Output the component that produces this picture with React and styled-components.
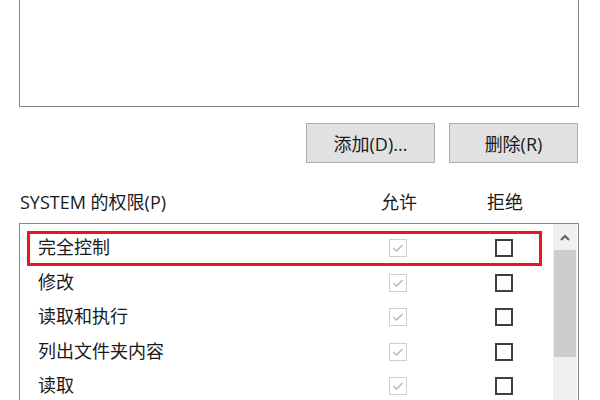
import React from 'react'
import styled, { createGlobalStyle } from 'styled-components'

const GlobalStyle = createGlobalStyle`
  html, body {
    margin: 0;
    padding: 0;
    background: #ffffff;
  }
  body {
    font-family: "Segoe UI", "Open Sans", "Noto Sans CJK SC", sans-serif;
    color: #1a1a1a;
    overflow: hidden;
  }
`

const Page = styled.div`
  width: 560px;
  margin-left: 19px;
  height: 400px;
  overflow: hidden;
`

const GroupBox = styled.div`
  height: 106px;
  border: 1px solid #8a8a8a;
  border-top: none;
  background: #fff;
`

const ButtonRow = styled.div`
  display: flex;
  justify-content: flex-end;
  gap: 14px;
  margin-top: 16px;
  padding-right: 1px;
`

const Button = styled.button`
  width: 129px;
  height: 40px;
  background: #e1e1e1;
  border: 1px solid #adadad;
  font-family: "Segoe UI", "Open Sans", "Noto Sans CJK SC", sans-serif;
  font-size: 18px;
  color: #1a1a1a;
  padding: 0;
`

const Header = styled.div`
  display: grid;
  grid-template-columns: 349px 60px 46px 60px;
  margin-top: 27px;
  height: 24px;
  line-height: 24px;
  font-size: 18px;
  padding-left: 1px;
`

const HeaderCell = styled.div`
  text-align: ${p => (p.$center ? 'center' : 'left')};
  white-space: nowrap;
`

const ListBox = styled.div`
  margin-top: 9px;
  height: 220px;
  border: 1px solid #8a8a8a;
  display: flex;
  justify-content: space-between;
`

const Rows = styled.div`
  width: 515px;
  padding: 7px 0 0 7px;
`

const Row = styled.div`
  display: grid;
  grid-template-columns: 341px 60px 46px 60px;
  align-items: center;
  height: 34.5px;
  line-height: 30px;
  box-sizing: border-box;
  font-size: 18px;
  box-shadow: ${p => (p.$highlight ? 'inset 0 0 0 3px #f0141e' : 'none')};
`

const Label = styled.div`
  padding-left: 11px;
  white-space: nowrap;
  margin-top: -2px;
`

const BoxCell = styled.div`
  display: flex;
  justify-content: center;
`

const Check = styled.div`
  width: 18px;
  height: 18px;
  box-sizing: border-box;
  border: ${p => (p.$disabled ? '1px solid #cfcfcf' : '2px solid #3f3f3f')};
  background: #fff;
  display: flex;
  align-items: center;
  justify-content: center;
`

const ScrollBar = styled.div`
  width: 24px;
  margin-right: 1px;
  background: #f0f0f0;
  display: flex;
  flex-direction: column;
`

const ArrowButton = styled.div`
  height: 26px;
  display: flex;
  align-items: center;
  justify-content: center;
`

const Thumb = styled.div`
  height: 107px;
  margin: 0 1px;
  background: #cdcdcd;
`

const permissions = [
  { name: '完全控制', highlight: true },
  { name: '修改' },
  { name: '读取和执行' },
  { name: '列出文件夹内容' },
  { name: '读取' },
]

const CheckMark = () => (
  <svg width="12" height="10" viewBox="0 0 12 10">
    <polyline points="1.5,5 4.5,8 10.5,2" fill="none" stroke="#b4b4b4" strokeWidth="1.3" />
  </svg>
)

const App = () => {
  return (
    <Page>
      <GlobalStyle />
      <GroupBox />
      <ButtonRow>
        <Button>添加(D)...</Button>
        <Button>删除(R)</Button>
      </ButtonRow>
      <Header>
        <HeaderCell>SYSTEM 的权限(P)</HeaderCell>
        <HeaderCell $center>允许</HeaderCell>
        <div />
        <HeaderCell $center>拒绝</HeaderCell>
      </Header>
      <ListBox>
        <Rows>
          {permissions.map(p => (
            <Row key={p.name} $highlight={p.highlight}>
              <Label>{p.name}</Label>
              <BoxCell>
                <Check $disabled>
                  <CheckMark />
                </Check>
              </BoxCell>
              <div />
              <BoxCell>
                <Check />
              </BoxCell>
            </Row>
          ))}
        </Rows>
        <ScrollBar>
          <ArrowButton>
            <svg width="10" height="7" viewBox="0 0 10 7">
              <polyline points="1,6 5,2 9,6" fill="none" stroke="#606060" strokeWidth="2" />
            </svg>
          </ArrowButton>
          <Thumb />
        </ScrollBar>
      </ListBox>
    </Page>
  )
}

export default App
